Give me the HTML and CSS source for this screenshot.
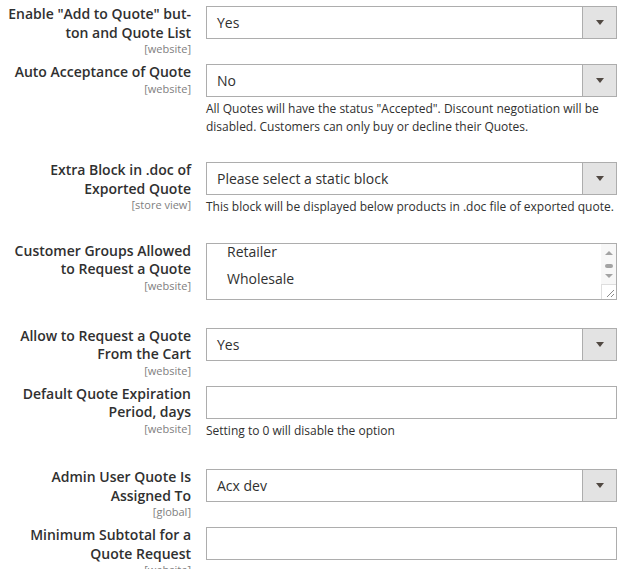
FILE: index.html
```html
<!DOCTYPE html>
<html lang="en">
<head>
<meta charset="utf-8">
<title>Request a Quote configuration</title>
<link rel="stylesheet" href="styles.css">
</head>
<body>
<div class="form">
  <div class="row">
    <div class="label"><span class="title">Enable "Add to Quote" but-<br>ton and Quote List</span><span class="scope">[website]</span></div>
    <div class="control">
      <div class="select"><span class="value">Yes</span><span class="arrow"></span></div>
    </div>
  </div>

  <div class="row">
    <div class="label"><span class="title">Auto Acceptance of Quote</span><span class="scope">[website]</span></div>
    <div class="control">
      <div class="select"><span class="value">No</span><span class="arrow"></span></div>
      <p class="note">All Quotes will have the status "Accepted". Discount negotiation will be disabled. Customers can only buy or decline their Quotes.</p>
    </div>
  </div>

  <div class="row">
    <div class="label"><span class="title">Extra Block in .doc of<br>Exported Quote</span><span class="scope">[store view]</span></div>
    <div class="control">
      <div class="select"><span class="value">Please select a static block</span><span class="arrow"></span></div>
      <p class="note">This block will be displayed below products in .doc file of exported quote.</p>
    </div>
  </div>

  <div class="row">
    <div class="label"><span class="title">Customer Groups Allowed<br>to Request a Quote</span><span class="scope">[website]</span></div>
    <div class="control">
      <div class="multiselect">
        <div class="options">
          <div class="option">Retailer</div>
          <div class="option">Wholesale</div>
        </div>
        <div class="scrollbar">
          <span class="sb-up"></span>
          <span class="sb-thumb"></span>
          <span class="sb-down"></span>
          <span class="resizer">
            <svg width="15" height="15" viewBox="0 0 15 15"><path d="M13 6 L6 13 M13 10 L10 13" stroke="#8a8a8a" stroke-width="1" fill="none"/></svg>
          </span>
        </div>
      </div>
    </div>
  </div>

  <div class="row">
    <div class="label"><span class="title">Allow to Request a Quote<br>From the Cart</span><span class="scope">[website]</span></div>
    <div class="control">
      <div class="select"><span class="value">Yes</span><span class="arrow"></span></div>
    </div>
  </div>

  <div class="row">
    <div class="label"><span class="title">Default Quote Expiration<br>Period, days</span><span class="scope">[website]</span></div>
    <div class="control control-spaced">
      <div class="input"></div>
      <p class="note">Setting to 0 will disable the option</p>
    </div>
  </div>

  <div class="row">
    <div class="label"><span class="title">Admin User Quote Is<br>Assigned To</span><span class="scope">[global]</span></div>
    <div class="control">
      <div class="select"><span class="value">Acx dev</span><span class="arrow"></span></div>
    </div>
  </div>

  <div class="row">
    <div class="label"><span class="title">Minimum Subtotal for a<br>Quote Request</span><span class="scope">[website]</span></div>
    <div class="control">
      <div class="input"></div>
    </div>
  </div>
</div>
</body>
</html>
```

FILE: styles.css
```css
html, body {
  margin: 0;
  padding: 0;
  background: #ffffff;
}

body {
  font-family: "Open Sans", "Noto Sans", "Liberation Sans", sans-serif;
  color: #303030;
}

.form {
  padding: 6px 10px 0 0;
  display: flex;
  flex-direction: column;
}

.row {
  display: flex;
  align-items: flex-start;
  gap: 15px;
}

.label {
  width: 191px;
  flex: none;
  display: flex;
  flex-direction: column;
  align-items: flex-end;
  text-align: right;
  margin-top: -1px;
  padding-bottom: 8px;
}

.title {
  font-size: 14px;
  font-weight: 600;
  line-height: 18.5px;
  color: #303030;
  white-space: nowrap;
}

.scope {
  font-size: 11px;
  line-height: 14px;
  color: #808080;
}

.control {
  flex: 1;
  min-width: 0;
  padding-bottom: 25px;
}

.control-spaced {
  padding-bottom: 28px;
}

.select,
.input {
  box-sizing: border-box;
  height: 33px;
  border: 1px solid #adadad;
  background: #ffffff;
}

.select {
  display: flex;
  align-items: stretch;
}

.value {
  flex: 1;
  padding-left: 10px;
  font-size: 14px;
  line-height: 31px;
  color: #303030;
}

.arrow {
  width: 33px;
  flex: none;
  border-left: 1px solid #adadad;
  background: #e3e3e3;
  display: flex;
  align-items: center;
  justify-content: center;
}

.arrow::after {
  content: "";
  width: 0;
  height: 0;
  border-left: 4px solid transparent;
  border-right: 4px solid transparent;
  border-top: 5px solid #514943;
}

.note {
  margin: 3px 0 2px;
  font-size: 12px;
  line-height: 17.5px;
  color: #303030;
}

.multiselect {
  box-sizing: border-box;
  height: 57px;
  border: 1px solid #adadad;
  display: flex;
  overflow: hidden;
  margin-bottom: 3px;
}

.options {
  flex: 1;
  overflow: hidden;
}

.option {
  padding-left: 20px;
  font-size: 14px;
  line-height: 16px;
  margin-bottom: 11px;
}

.scrollbar {
  width: 15px;
  flex: none;
  background: #f7f7f7;
  display: flex;
  flex-direction: column;
  align-items: center;
  padding-top: 7px;
}

.sb-up {
  width: 0;
  height: 0;
  border-left: 4px solid transparent;
  border-right: 4px solid transparent;
  border-bottom: 4px solid #a3a3a3;
}

.sb-thumb {
  margin-top: 9px;
  width: 8px;
  height: 4px;
  border-radius: 2px;
  background: #a3a3a3;
}

.sb-down {
  margin-top: 6px;
  width: 0;
  height: 0;
  border-left: 4px solid transparent;
  border-right: 4px solid transparent;
  border-top: 4px solid #a3a3a3;
}

.resizer {
  margin-top: auto;
  box-sizing: border-box;
  width: 15px;
  height: 15px;
  border-top: 1px solid #dedede;
  border-left: 1px solid #dedede;
  background: #ffffff;
  display: block;
  line-height: 0;
}

.resizer svg {
  display: block;
  margin: -1px 0 0 -1px;
}
```
